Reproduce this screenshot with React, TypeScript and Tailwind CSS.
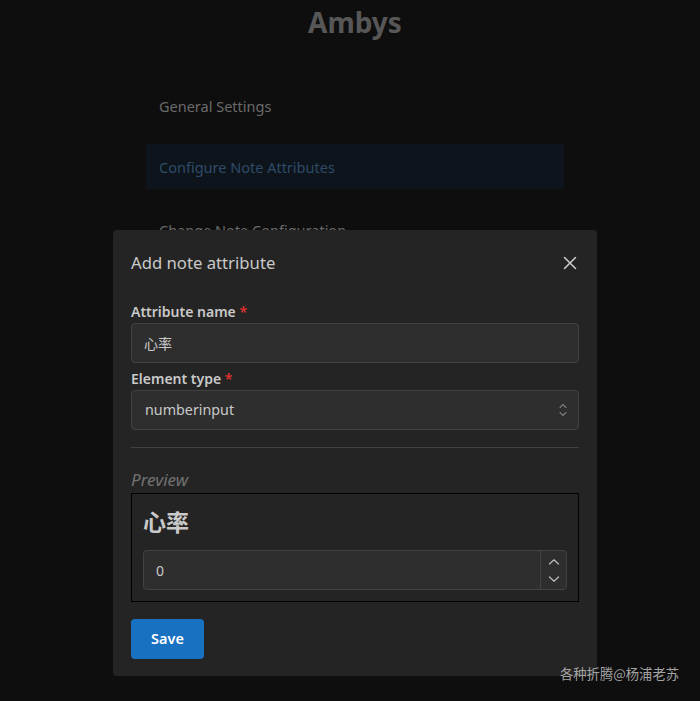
import React from "react";

const font = { fontFamily: '"Noto Sans", "Noto Sans CJK SC", sans-serif' };

function CloseIcon() {
  return (
    <svg width="16" height="16" viewBox="0 0 16 16" fill="none">
      <path d="M2.5 2.5L13.5 13.5M13.5 2.5L2.5 13.5" stroke="#c9c9c9" strokeWidth="1.6" strokeLinecap="round" />
    </svg>
  );
}

function SelectorIcon() {
  return (
    <svg width="10" height="16" viewBox="0 0 10 16" fill="none">
      <path d="M2 5.5L5 2.5L8 5.5M2 10.5L5 13.5L8 10.5" stroke="#7a7a7a" strokeWidth="1.1" strokeLinecap="round" strokeLinejoin="round" />
    </svg>
  );
}

function Chevron({ up }: { up?: boolean }) {
  return (
    <svg width="12" height="8" viewBox="0 0 12 8" fill="none">
      <path d={up ? "M1.5 6L6 1.8L10.5 6" : "M1.5 2L6 6.2L10.5 2"} stroke="#bdbdbd" strokeWidth="1.2" strokeLinecap="round" strokeLinejoin="round" />
    </svg>
  );
}

export default function App() {
  return (
    <div className="relative w-[700px] h-[701px] bg-[#0e0e0e] overflow-hidden" style={font}>
      {/* background page */}
      <div className="flex flex-col items-center">
        <h1 className="mt-[3px] ml-[10px] h-[38px] text-[28px] leading-[38px] font-bold text-[#575757]">Ambys</h1>
        <nav className="mt-[43px] w-[418px] ml-[10px] flex flex-col">
          <div className="h-[45px] flex items-center px-[13px] text-[14.5px] text-[#6a6a6a]">General Settings</div>
          <div className="mt-[15px] h-[45px] flex items-center px-[13px] pt-[2px] text-[14.5px] text-[#2f4b68] bg-[#0d141b]">Configure Note Attributes</div>
          <div className="mt-[19px] h-[45px] flex items-center px-[13px] text-[14.5px] text-[#6a6a6a]">Change Note Configuration</div>
        </nav>
      </div>

      {/* modal */}
      <div className="absolute left-[113px] top-[230px] w-[484px] bg-[#242424] rounded-[4px] px-[18px] pb-[17px]">
        <div className="h-[66px] flex items-center justify-between">
          <span className="text-[16.7px] text-[#c9c9c9]">Add note attribute</span>
          <button className="w-[22px] h-[22px] flex items-center justify-center mr-[-2px]"><CloseIcon /></button>
        </div>
        <div className="pt-[4px] flex flex-col">
          <label className="text-[14px] leading-[21px] font-semibold text-[#c9c9c9] pt-[1px]">
            Attribute name <span className="text-[#e03131]">*</span>
          </label>
          <div className="mt-[1px] h-[40px] rounded-[4px] border border-[#424242] bg-[#2e2e2e] flex items-center px-[12px] text-[14px] text-[#c9c9c9]">心率</div>
          <label className="mt-[4px] pt-[1px] text-[14px] leading-[21px] font-semibold text-[#c9c9c9]">
            Element type <span className="text-[#e03131]">*</span>
          </label>
          <div className="mt-[1px] h-[40px] rounded-[4px] border border-[#424242] bg-[#2e2e2e] flex items-center justify-between pl-[13px] pr-[10px] text-[14.3px] text-[#c9c9c9]">
            <span>numberinput</span>
            <SelectorIcon />
          </div>
          <div className="mt-[17px] h-px bg-[#424242]" />
          <div className="mt-[20px] pt-[1px] text-[17px] leading-[22px] italic text-[#727272]">Preview</div>
          <div className="mt-[2px] border border-black px-[11px] pt-[11px] pb-[11px]">
            <div className="h-[34px] flex items-center text-[23px] font-bold text-[#c9c9c9]">心率</div>
            <div className="mt-[11px] h-[40px] rounded-[4px] border border-[#424242] bg-[#2e2e2e] flex items-stretch text-[14px] text-[#c9c9c9]">
              <div className="flex-1 flex items-center px-[12px]">0</div>
              <div className="w-[26px] border-l border-[#424242] flex flex-col items-center justify-center gap-[9px]">
                <Chevron up />
                <Chevron />
              </div>
            </div>
          </div>
          <button className="mt-[17px] w-[73px] h-[40px] rounded-[4px] bg-[#1971c2] text-white text-[14.5px] font-semibold">Save</button>
        </div>
      </div>

      {/* watermark */}
      <div className="absolute right-[21px] top-[664px] text-[13.3px] leading-[20px] text-[#a3a3a3]" style={{ fontFamily: '"Noto Sans CJK SC", sans-serif' }}>
        各种折腾@杨浦老苏
      </div>
    </div>
  );
}
